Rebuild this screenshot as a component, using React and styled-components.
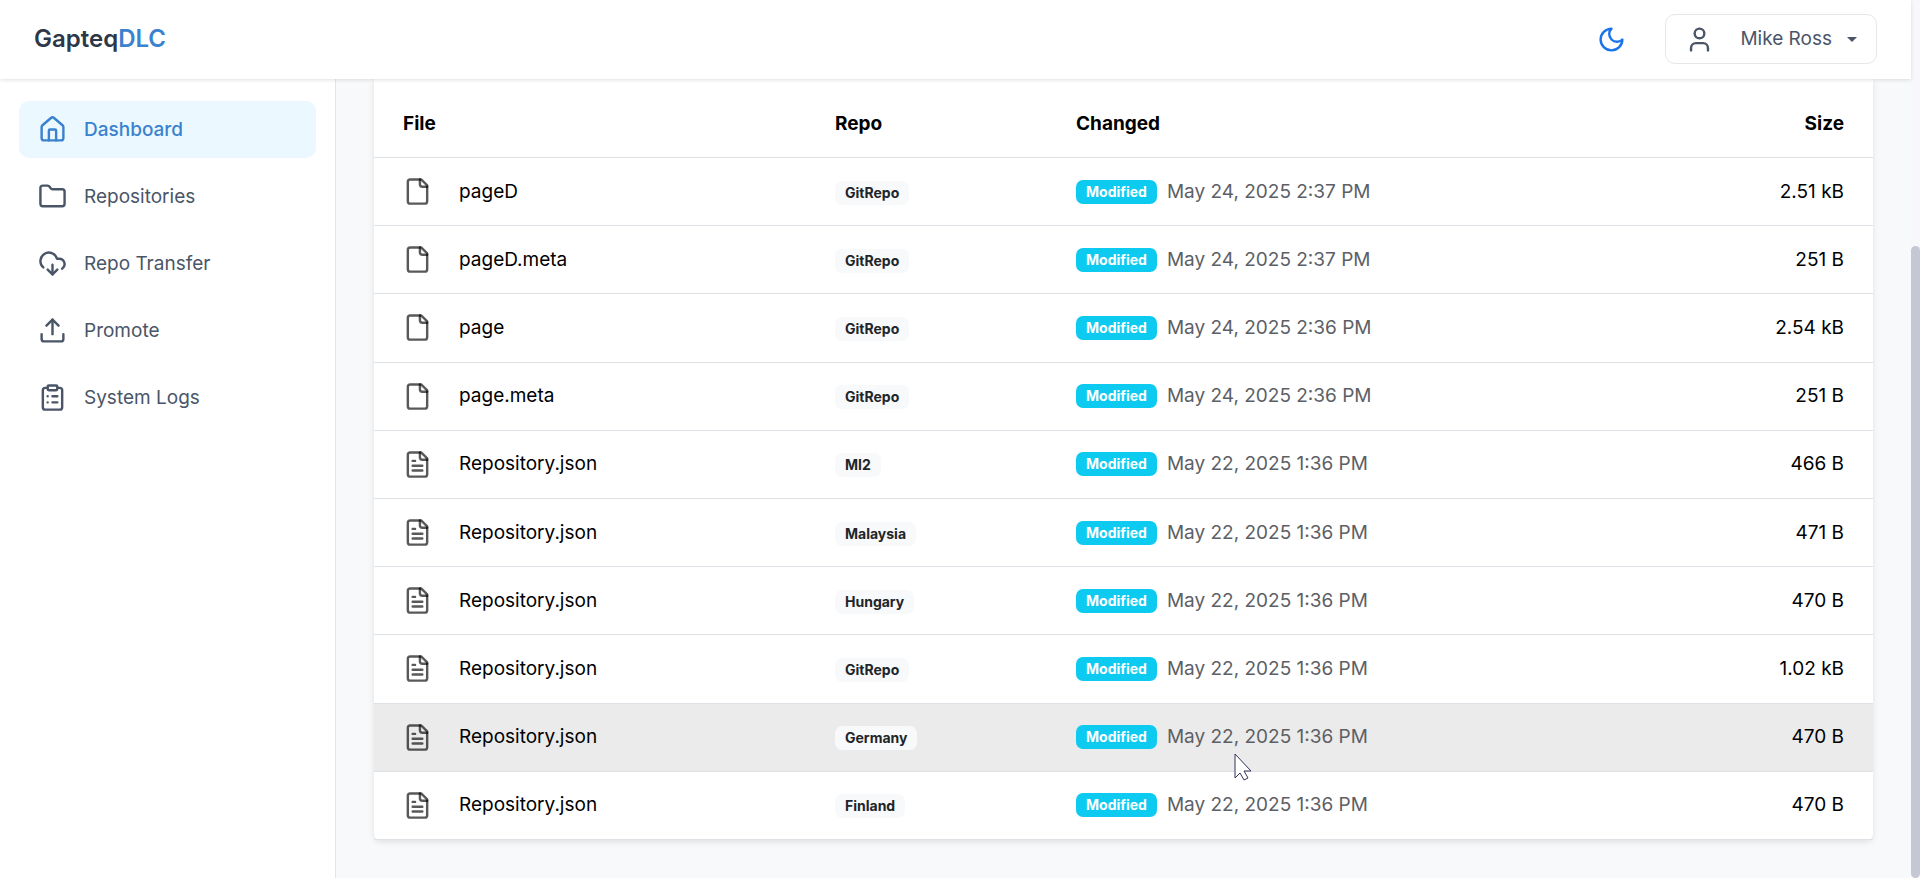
import React from 'react';
import styled, { createGlobalStyle } from 'styled-components';

const GlobalStyle = createGlobalStyle`
  * { box-sizing: border-box; }
  body {
    margin: 0;
    font-family: Inter, "Liberation Sans", sans-serif;
    font-size: 19px;
    line-height: 28px;
    color: #000;
    background: #f8f9fb;
  }
`;

const Shell = styled.div`
  display: grid;
  grid-template-columns: minmax(0, 1fr) 9px;
  min-height: 100vh;
`;

const Page = styled.div`
  display: flex;
  flex-direction: column;
`;

const Header = styled.header`
  position: relative;
  z-index: 1;
  display: flex;
  align-items: center;
  justify-content: space-between;
  height: 79px;
  padding: 0 34px 1px;
  background: #fff;
  box-shadow: 0 1px 4px rgba(0, 0, 0, 0.12);
`;

const Brand = styled.a`
  font-size: 24px;
  font-weight: 600;
  color: #2d3748;
  text-decoration: none;
`;

const BrandAccent = styled.span`
  color: #3b82ce;
`;

const HeaderActions = styled.div`
  display: flex;
  align-items: center;
  gap: 39px;
`;

const ThemeButton = styled.button`
  display: flex;
  padding: 0;
  border: 0;
  background: none;
  color: #1a73e8;
`;

const UserButton = styled.button`
  display: flex;
  align-items: center;
  height: 50px;
  padding: 0 19px;
  border: 1px solid #e5e7eb;
  border-radius: 10px;
  background: #fff;
  color: #4a5568;
  font: inherit;
`;

const UserName = styled.span`
  margin: 0 15px 0 26px;
`;

const Body = styled.div`
  display: flex;
  flex: 1;
`;

const Sidebar = styled.nav`
  display: flex;
  flex-direction: column;
  gap: 10px;
  flex: 0 0 336px;
  padding: 22px 19px;
  border-right: 1px solid #e2e5ea;
  background: #fff;
`;

const NavItem = styled.a`
  display: flex;
  align-items: center;
  gap: 17px;
  height: 57px;
  padding: 0 19px;
  border-radius: 10px;
  color: ${(p) => (p.$active ? '#3b82ce' : '#4a5568')};
  background: ${(p) => (p.$active ? '#ebf8ff' : 'transparent')};
  font-weight: ${(p) => (p.$active ? 500 : 400)};
  text-decoration: none;
`;

const Main = styled.main`
  flex: 1;
  padding: 0 38px;
`;

const Card = styled.section`
  padding-top: 11px;
  background: #fff;
  border-radius: 0 0 6px 6px;
  box-shadow: 0 2px 6px rgba(0, 0, 0, 0.1);
`;

const Table = styled.table`
  width: 100%;
  height: 750px;
  border-collapse: separate;
  border-spacing: 0;
  table-layout: fixed;
`;

const Row = styled.tr`
  background: ${(p) => (p.$hovered ? '#ebebeb' : 'transparent')};
`;

const Col = styled.col`
  width: ${(p) => p.$width};
`;

const HeadCell = styled.th`
  height: 68px;
  padding: 0 29px;
  border-bottom: 1px solid #dee2e6;
  font-weight: 700;
  text-align: ${(p) => p.$align || 'left'};
`;

const Cell = styled.td`
  padding: 0 29px;
  border-bottom: 1px solid #dee2e6;
  text-align: ${(p) => p.$align || 'left'};
`;

const FileName = styled.div`
  display: flex;
  align-items: center;
  gap: 27px;
`;

const Inline = styled.div`
  display: flex;
  align-items: center;
  gap: 10px;
  color: #5c6065;
`;

const Badge = styled.span`
  display: inline-block;
  padding: 0 10px;
  border-radius: 7px;
  font-size: 14px;
  line-height: 24px;
  font-weight: 700;
  color: ${(p) => (p.$info ? '#fff' : '#212529')};
  background: ${(p) => (p.$info ? '#0dcaf0' : '#f8f9fa')};
`;

const ScrollTrack = styled.div`
  display: flex;
  flex-direction: column;
  justify-content: flex-end;
  background: #f8f8fc;
`;

const ScrollThumb = styled.div`
  height: 72%;
  border-radius: 5px;
  background: #c5c7d4;
`;

const Pointer = styled.svg`
  position: absolute;
  left: 1234px;
  top: 753px;
`;

const Icon = ({ children, color = 'currentColor' }) => (
  <svg width="29" height="29" viewBox="0 0 24 24" fill="none" stroke={color} strokeWidth="2"
    strokeLinecap="round" strokeLinejoin="round" aria-hidden="true">
    {children}
  </svg>
);

const HomeIcon = () => (
  <Icon>
    <path d="M15 21v-8a1 1 0 0 0-1-1h-4a1 1 0 0 0-1 1v8" />
    <path d="M3 10a2 2 0 0 1 .709-1.528l7-6a2 2 0 0 1 2.582 0l7 6A2 2 0 0 1 21 10v9a2 2 0 0 1-2 2H5a2 2 0 0 1-2-2z" />
  </Icon>
);
const FolderIcon = () => (
  <Icon>
    <path d="M20 20a2 2 0 0 0 2-2V8a2 2 0 0 0-2-2h-7.900a2 2 0 0 1-1.690-.900L9.600 3.900A2 2 0 0 0 7.930 3H4a2 2 0 0 0-2 2v13a2 2 0 0 0 2 2Z" />
  </Icon>
);
const TransferIcon = () => (
  <Icon>
    <path d="M12 13v8l-4-4" />
    <path d="m12 21 4-4" />
    <path d="M4.393 15.269A7 7 0 1 1 15.710 8h1.790a4.500 4.500 0 0 1 2.436 8.284" />
  </Icon>
);
const UploadIcon = () => (
  <Icon>
    <path d="M21 15v4a2 2 0 0 1-2 2H5a2 2 0 0 1-2-2v-4" />
    <path d="m17 8-5-5-5 5" />
    <path d="M12 3v12" />
  </Icon>
);
const LogsIcon = () => (
  <Icon>
    <rect width="8" height="4" x="8" y="2" rx="1" />
    <path d="M16 4h2a2 2 0 0 1 2 2v14a2 2 0 0 1-2 2H6a2 2 0 0 1-2-2V6a2 2 0 0 1 2-2h2" />
    <path d="M12 11h4M12 16h4M8 11h.01M8 16h.01" />
  </Icon>
);
const MoonIcon = () => (
  <Icon>
    <path d="M12 3a6 6 0 0 0 9 9 9 9 0 1 1-9-9Z" />
  </Icon>
);
const UserIcon = () => (
  <Icon>
    <path d="M19 21v-2a4 4 0 0 0-4-4H9a4 4 0 0 0-4 4v2" />
    <circle cx="12" cy="7" r="4" />
  </Icon>
);
const FileIcon = ({ lined }) => (
  <Icon color="rgba(0, 0, 0, 0.65)">
    <path d="M15 2H6a2 2 0 0 0-2 2v16a2 2 0 0 0 2 2h12a2 2 0 0 0 2-2V7Z" />
    <path d="M14 2v4a2 2 0 0 0 2 2h4" />
    {lined && <path d="M10 9H8M16 13H8M16 17H8" />}
  </Icon>
);

const NAV = [
  ['Dashboard', HomeIcon],
  ['Repositories', FolderIcon],
  ['Repo Transfer', TransferIcon],
  ['Promote', UploadIcon],
  ['System Logs', LogsIcon],
];

const FILES = [
  ['pageD', 'GitRepo', 'May 24, 2025 2:37 PM', '2.51 kB'],
  ['pageD.meta', 'GitRepo', 'May 24, 2025 2:37 PM', '251 B'],
  ['page', 'GitRepo', 'May 24, 2025 2:36 PM', '2.54 kB'],
  ['page.meta', 'GitRepo', 'May 24, 2025 2:36 PM', '251 B'],
  ['Repository.json', 'MI2', 'May 22, 2025 1:36 PM', '466 B'],
  ['Repository.json', 'Malaysia', 'May 22, 2025 1:36 PM', '471 B'],
  ['Repository.json', 'Hungary', 'May 22, 2025 1:36 PM', '470 B'],
  ['Repository.json', 'GitRepo', 'May 22, 2025 1:36 PM', '1.02 kB'],
  ['Repository.json', 'Germany', 'May 22, 2025 1:36 PM', '470 B'],
  ['Repository.json', 'Finland', 'May 22, 2025 1:36 PM', '470 B'],
];

export default function App() {
  return (
    <Shell>
      <GlobalStyle />
      <Page>
        <Header>
          <Brand href="#">Gapteq<BrandAccent>DLC</BrandAccent></Brand>
          <HeaderActions>
            <ThemeButton type="button" aria-label="Toggle dark mode"><MoonIcon /></ThemeButton>
            <UserButton type="button">
              <UserIcon />
              <UserName>Mike Ross</UserName>
              <svg width="10" height="5" viewBox="0 0 10 5" aria-hidden="true">
                <path d="M0 0h10L5 5z" fill="currentColor" />
              </svg>
            </UserButton>
          </HeaderActions>
        </Header>
        <Body>
          <Sidebar aria-label="Main">
            {NAV.map(([label, Glyph], i) => (
              <NavItem key={label} href="#" $active={i === 0}>
                <Glyph />
                {label}
              </NavItem>
            ))}
          </Sidebar>
          <Main>
            <Card>
              <Table>
                <colgroup>
                  <Col $width="432px" />
                  <Col $width="241px" />
                  <Col $width="auto" />
                  <Col $width="240px" />
                </colgroup>
                <thead>
                  <tr>
                    <HeadCell scope="col">File</HeadCell>
                    <HeadCell scope="col">Repo</HeadCell>
                    <HeadCell scope="col">Changed</HeadCell>
                    <HeadCell scope="col" $align="right">Size</HeadCell>
                  </tr>
                </thead>
                <tbody>
                  {FILES.map(([name, repo, date, size], i) => (
                    <Row key={i} $hovered={repo === 'Germany'}>
                      <Cell>
                        <FileName><FileIcon lined={name.endsWith('.json')} />{name}</FileName>
                      </Cell>
                      <Cell><Badge>{repo}</Badge></Cell>
                      <Cell><Inline><Badge $info>Modified</Badge>{date}</Inline></Cell>
                      <Cell $align="right">{size}</Cell>
                    </Row>
                  ))}
                </tbody>
              </Table>
            </Card>
          </Main>
        </Body>
      </Page>
      <ScrollTrack aria-hidden="true"><ScrollThumb /></ScrollTrack>
      <Pointer width="20" height="29" viewBox="0 0 20 29" aria-hidden="true">
        <path d="M1 1v24l5-5 4 7 4-2-4-7h7z" fill="#fff" stroke="#33335c" />
      </Pointer>
    </Shell>
  );
}
